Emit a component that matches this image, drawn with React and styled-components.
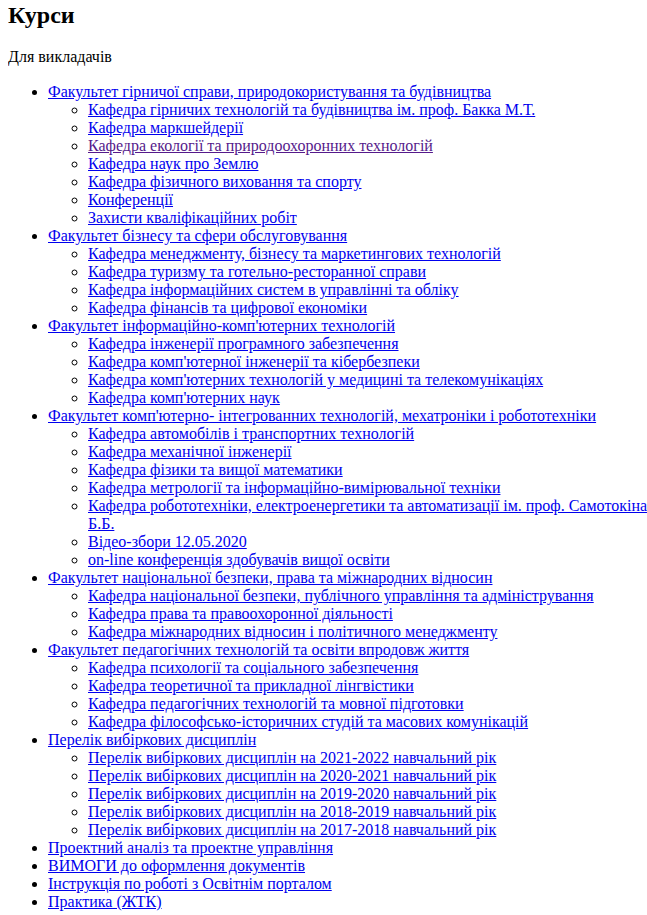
import styled, { createGlobalStyle } from 'styled-components';

const GlobalStyle = createGlobalStyle`
  body {
    margin: 0 -4px 8px 8px;
    background: #fff;
    color: #000;
    font-family: "Liberation Serif", "Times New Roman", serif;
    font-size: 16px;
    overflow-x: hidden;
  }
`;

const sections = [
  {
    title: 'Факультет гірничої справи, природокористування та будівництва',
    items: [
      { t: 'Кафедра гірничих технологій та будівництва ім. проф. Бакка М.Т.' },
      { t: 'Кафедра маркшейдерії' },
      { t: 'Кафедра екології та природоохоронних технологій', visited: true },
      { t: 'Кафедра наук про Землю' },
      { t: 'Кафедра фізичного виховання та спорту' },
      { t: 'Конференції' },
      { t: 'Захисти кваліфікаційних робіт' },
    ],
  },
  {
    title: 'Факультет бізнесу та сфери обслуговування',
    items: [
      { t: 'Кафедра менеджменту, бізнесу та маркетингових технологій' },
      { t: 'Кафедра туризму та готельно-ресторанної справи' },
      { t: 'Кафедра інформаційних систем в управлінні та обліку' },
      { t: 'Кафедра фінансів та цифрової економіки' },
    ],
  },
  {
    title: "Факультет інформаційно-комп'ютерних технологій",
    items: [
      { t: 'Кафедра інженерії програмного забезпечення' },
      { t: "Кафедра комп'ютерної інженерії та кібербезпеки" },
      { t: "Кафедра комп'ютерних технологій у медицині та телекомунікаціях" },
      { t: "Кафедра комп'ютерних наук" },
    ],
  },
  {
    title: "Факультет комп'ютерно- інтегрованних технологій, мехатроніки і робототехніки",
    items: [
      { t: 'Кафедра автомобілів і транспортних технологій' },
      { t: 'Кафедра механічної інженерії' },
      { t: 'Кафедра фізики та вищої математики' },
      { t: 'Кафедра метрології та інформаційно-вимірювальної техніки' },
      { t: 'Кафедра робототехніки, електроенергетики та автоматизації ім. проф. Самотокіна Б.Б.' },
      { t: 'Відео-збори 12.05.2020' },
      { t: 'on-line конференція здобувачів вищої освіти' },
    ],
  },
  {
    title: 'Факультет національної безпеки, права та міжнародних відносин',
    items: [
      { t: 'Кафедра національної безпеки, публічного управління та адміністрування' },
      { t: 'Кафедра права та правоохоронної діяльності' },
      { t: 'Кафедра міжнародних відносин і політичного менеджменту' },
    ],
  },
  {
    title: 'Факультет педагогічних технологій та освіти впродовж життя',
    items: [
      { t: 'Кафедра психології та соціального забезпечення' },
      { t: 'Кафедра теоретичної та прикладної лінгвістики' },
      { t: 'Кафедра педагогічних технологій та мовної підготовки' },
      { t: 'Кафедра філософсько-історичних студій та масових комунікацій' },
    ],
  },
  {
    title: 'Перелік вибіркових дисциплін',
    items: [
      { t: 'Перелік вибіркових дисциплін на 2021-2022 навчальний рік' },
      { t: 'Перелік вибіркових дисциплін на 2020-2021 навчальний рік' },
      { t: 'Перелік вибіркових дисциплін на 2019-2020 навчальний рік' },
      { t: 'Перелік вибіркових дисциплін на 2018-2019 навчальний рік' },
      { t: 'Перелік вибіркових дисциплін на 2017-2018 навчальний рік' },
    ],
  },
  { title: 'Проектний аналіз та проектне управління', items: [] },
  { title: 'ВИМОГИ до оформлення документів', items: [] },
  { title: 'Інструкція по роботі з Освітнім порталом', items: [] },
  { title: 'Практика (ЖТК)', items: [] },
];

export default function App() {
  return (
    <>
      <GlobalStyle />
      <Page>
        <Title>Курси</Title>
        <Sub>Для викладачів</Sub>
        <TopList>
          {sections.map((s) => (
            <li key={s.title}>
              <Link href="#">{s.title}</Link>
              {s.items.length > 0 && (
                <SubList>
                  {s.items.map((i) => (
                    <li key={i.t}>
                      <Link href="#" $visited={i.visited}>{i.t}</Link>
                    </li>
                  ))}
                </SubList>
              )}
            </li>
          ))}
        </TopList>
      </Page>
    </>
  );
}

const Page = styled.div`
  padding-top: 2px;
`;

const Title = styled.h2`
  font-size: 24px;
  font-weight: bold;
  margin: 0 0 19px;
`;

const Sub = styled.p`
  margin: 0 0 17px;
`;

const TopList = styled.ul`
  list-style: disc;
  margin: 0;
  padding-left: 40px;
`;

const SubList = styled.ul`
  list-style: circle;
  margin: 0;
  padding-left: 40px;
`;

const Link = styled.a`
  color: ${(p) => (p.$visited ? '#551a8b' : '#0000ee')};
  text-decoration: underline;
`;
